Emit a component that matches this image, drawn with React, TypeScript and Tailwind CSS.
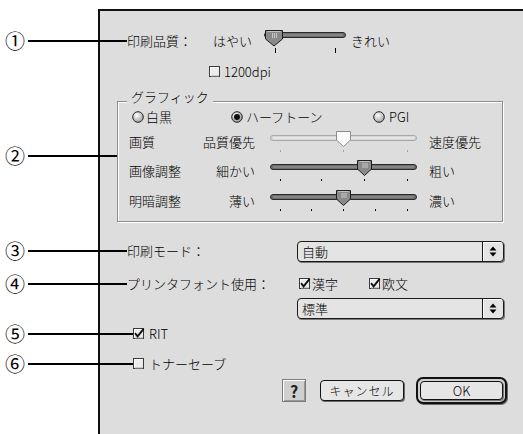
import React from 'react';

// Mac OS 9 style printer option dialog with callout numbers

const Callout = ({ n, className = '' }: { n: string; className?: string }) => (
  <div className={`flex items-center shrink-0 ${className}`}>
    <span className="w-[18px] text-[20px] leading-[20px] text-center font-normal">{n}</span>
    <span className="ml-[5px] h-[2px] flex-1 bg-black" />
  </div>
);

interface SliderProps {
  width: number;
  height: number;
  trackY: number;
  trackH: number;
  thumbX: number;
  thumbW: number;
  thumbTop: number;
  thumbMid: number;
  thumbTip: number;
  ticks: number[];
  tickY: number;
  tickH: number;
  disabled?: boolean;
}

const Slider = (p: SliderProps) => {
  const tx = p.thumbX;
  const c = tx + p.thumbW / 2;
  return (
    <svg width={p.width} height={p.height} className="shrink-0 block">
      <rect
        x={0.5}
        y={p.trackY + 0.5}
        width={p.width - 1}
        height={p.trackH}
        rx={p.trackH / 2}
        fill={p.disabled ? '#d6d6d6' : '#6e6e6e'}
        stroke={p.disabled ? '#a8a8a8' : '#2a2a2a'}
      />
      <line
        x1={3}
        x2={p.width - 3}
        y1={p.trackY + p.trackH / 2 + 0.5}
        y2={p.trackY + p.trackH / 2 + 0.5}
        stroke={p.disabled ? '#f4f4f4' : '#9a9a9a'}
      />
      {p.ticks.map(t => (
        <rect key={t} x={t} y={p.tickY} width={1} height={p.tickH} fill={p.disabled ? '#a0a0a0' : '#000'} />
      ))}
      <path
        d={`M${tx + 0.5},${p.thumbTop + 0.5} H${tx + p.thumbW - 0.5} V${p.thumbMid} L${c},${p.thumbTip} L${tx + 0.5},${p.thumbMid} Z`}
        fill={p.disabled ? '#fbfbfb' : '#8a8a8a'}
        stroke={p.disabled ? '#8c8c8c' : '#1e1e1e'}
      />
      {!p.disabled && (
        <>
          <line x1={tx + 2.5} x2={tx + p.thumbW - 2.5} y1={p.thumbTop + 1.5} y2={p.thumbTop + 1.5} stroke="#c4c4c4" />
          {[-2, 0, 2].map(d => (
            <line key={d} x1={c + d + 0.5} x2={c + d + 0.5} y1={p.thumbTop + 3} y2={p.thumbMid - 1} stroke="#c8c8c8" />
          ))}
        </>
      )}
    </svg>
  );
};

const MidSlider = ({ thumbX, ticks, disabled }: { thumbX: number; ticks: number[]; disabled?: boolean }) => (
  <Slider
    width={147}
    height={24}
    trackY={5}
    trackH={5}
    thumbX={thumbX}
    thumbW={15}
    thumbTop={1}
    thumbMid={10}
    thumbTip={16.5}
    ticks={ticks}
    tickY={20}
    tickH={2}
    disabled={disabled}
  />
);

const Radio = ({ on }: { on?: boolean }) => (
  <svg width={12} height={12} className="shrink-0 block">
    <defs>
      <radialGradient id={on ? 'rg-on' : 'rg-off'} cx="40%" cy="35%" r="70%">
        <stop offset="0%" stopColor="#ffffff" />
        <stop offset="100%" stopColor={on ? '#8a8a8a' : '#9c9c9c'} />
      </radialGradient>
    </defs>
    <circle cx={6} cy={6} r={5.3} fill={`url(#${on ? 'rg-on' : 'rg-off'})`} stroke="#262626" />
    {on && <circle cx={6} cy={6} r={3} fill="#111" />}
  </svg>
);

const Check = ({ on }: { on?: boolean }) => (
  <svg width={12} height={12} className="shrink-0 block overflow-visible">
    <rect x={0.5} y={0.5} width={10} height={10} fill="#ececec" stroke="#3a3a3a" />
    <line x1={1.5} x2={9.5} y1={1.5} y2={1.5} stroke="#ffffff" />
    <line x1={1.5} x2={1.5} y1={1.5} y2={9.5} stroke="#ffffff" />
    <line x1={2} x2={10} y1={10} y2={10} stroke="#a8a8a8" />
    {on && <path d="M2,5.2 L4.6,8.4 L10.6,0.8" fill="none" stroke="#111" strokeWidth={1.9} />}
  </svg>
);

const Arrows = () => (
  <svg width={8} height={11} className="block">
    <path d="M4,0.5 L7.5,4.5 H0.5 Z" fill="#000" />
    <path d="M4,10.5 L7.5,6.5 H0.5 Z" fill="#000" />
  </svg>
);

const Popup = ({ label }: { label: string }) => (
  <div className="w-[207px] h-[21px] shrink-0 flex rounded-[4px] border border-[#1a1a1a] bg-[#e4e4e4] shadow-[1px_1px_0_#7a7a7a]">
    <span className="flex-1 pl-[4px] leading-[19px]">{label}</span>
    <span className="w-[21px] border-l border-[#1a1a1a] flex items-center justify-center rounded-r-[3px] shadow-[inset_1px_1px_0_#fff]">
      <Arrows />
    </span>
  </div>
);

export default function App() {
  return (
    <div className="w-[523px] h-[434px] bg-white overflow-hidden flex flex-col text-[13px] leading-[16px] font-light text-black font-['Noto_Sans_CJK_JP','Noto_Sans',sans-serif]">
      <div className="ml-[98px] mt-[9px] flex-1 flex flex-col bg-[#dddddd] border-t-2 border-l-2 border-[#111]">
        {/* 印刷品質 */}
        <div className="mt-[17px] h-[26px] pl-[27px] flex items-center">
          <Callout n="①" className="-ml-[122px] w-[122px]" />
          <span className="w-[86px] shrink-0">印刷品質：</span>
          <span className="w-[51px] shrink-0">はやい</span>
          <Slider
            width={82}
            height={26}
            trackY={4}
            trackH={5}
            thumbX={1}
            thumbW={18}
            thumbTop={2}
            thumbMid={11}
            thumbTip={18}
            ticks={[11, 71]}
            tickY={20}
            tickH={5}
          />
          <span className="ml-[5px]">きれい</span>
        </div>

        <div className="mt-[10px] h-[16px] pl-[109px] flex items-center">
          <Check />
          <span className="ml-[3px]">1200dpi</span>
        </div>

        {/* グラフィック */}
        <div className="relative mt-[21px] ml-[17px] w-[386px] h-[121px] flex flex-col border border-[#8e8e8e] shadow-[inset_1px_1px_0_#fff,1px_1px_0_#fff]">
          <Callout n="②" className="absolute left-[-113px] top-[44px] w-[112px] h-[20px]" />
          <span className="self-start ml-[9px] -mt-[12px] h-[14px] px-[4px] leading-[14px] bg-[#dddddd]">グラフィック</span>

          <div className="mt-[5px] h-[16px] pl-[14px] flex items-center">
            <div className="w-[99px] flex items-center gap-[2px]">
              <Radio />
              <span>白黒</span>
            </div>
            <div className="w-[142px] flex items-center gap-[3px]">
              <Radio on />
              <span>ハーフトーン</span>
            </div>
            <div className="flex items-center gap-[4px]">
              <Radio />
              <span>PGI</span>
            </div>
          </div>

          <div className="mt-[5px] h-[24px] pl-[11px] flex items-center">
            <span className="w-[74px] shrink-0">画質</span>
            <span className="w-[52px] shrink-0 text-right">品質優先</span>
            <span className="ml-[15px] flex"><MidSlider thumbX={66} ticks={[10, 73, 137]} disabled /></span>
            <span className="ml-[12px]">速度優先</span>
          </div>

          <div className="mt-[5px] h-[24px] pl-[11px] flex items-center">
            <span className="w-[74px] shrink-0">画像調整</span>
            <span className="w-[52px] shrink-0 text-right">細かい</span>
            <span className="ml-[15px] flex"><MidSlider thumbX={87} ticks={[10, 51, 94, 137]} /></span>
            <span className="ml-[12px]">粗い</span>
          </div>

          <div className="mt-[6px] h-[24px] pl-[11px] flex items-center">
            <span className="w-[74px] shrink-0">明暗調整</span>
            <span className="w-[52px] shrink-0 text-right">薄い</span>
            <span className="ml-[15px] flex"><MidSlider thumbX={66} ticks={[10, 41, 73, 105, 137]} /></span>
            <span className="ml-[12px]">濃い</span>
          </div>
        </div>

        {/* 印刷モード */}
        <div className="mt-[18px] h-[22px] pl-[27px] flex items-center">
          <Callout n="③" className="-ml-[122px] w-[122px]" />
          <span className="w-[170px] shrink-0">印刷モード：</span>
          <Popup label="自動" />
        </div>

        <div className="mt-[14px] h-[16px] pl-[27px] flex items-center">
          <Callout n="④" className="-ml-[122px] w-[122px]" />
          <span className="w-[172px] shrink-0">プリンタフォント使用：</span>
          <div className="w-[70px] flex items-center gap-[1px]">
            <Check on />
            <span>漢字</span>
          </div>
          <div className="flex items-center gap-[1px]">
            <Check on />
            <span>欧文</span>
          </div>
        </div>

        <div className="mt-[6px] pl-[197px] flex">
          <Popup label="標準" />
        </div>

        <div className="mt-[7px] h-[16px] pl-[33px] flex items-center">
          <Callout n="⑤" className="-ml-[128px] w-[128px]" />
          <Check on />
          <span className="ml-[4px]">RIT</span>
        </div>

        <div className="mt-[14px] h-[16px] pl-[33px] flex items-center">
          <Callout n="⑥" className="-ml-[128px] w-[128px]" />
          <Check />
          <span className="ml-[4px]">トナーセーブ</span>
        </div>

        {/* buttons */}
        <div className="mt-[5px] h-[27px] pl-[182px] flex items-center">
          <div className="w-[24px] h-[23px] flex items-center justify-center border border-[#7a7a7a] bg-[#cfcfcf] shadow-[inset_1px_1px_0_#fff,inset_-1px_-1px_0_#999] text-[16px] font-bold text-[#222]">
            ?
          </div>
          <div className="ml-[14px] w-[84px] h-[21px] flex items-center justify-center rounded-[4px] border border-[#111] bg-[#e6e6e6] shadow-[1px_1px_0_#6a6a6a] text-[12px] tracking-[1px]">
            キャンセル
          </div>
          <div className="ml-[12px] w-[91px] h-[27px] rounded-[7px] border-2 border-[#111] p-[2px] bg-[#cfcfcf] shadow-[1px_1px_0_#6a6a6a]">
            <div className="h-full flex items-center justify-center rounded-[4px] border border-[#111] bg-[#e6e6e6] shadow-[1px_1px_0_#7a7a7a]">
              OK
            </div>
          </div>
        </div>
      </div>
    </div>
  );
}
